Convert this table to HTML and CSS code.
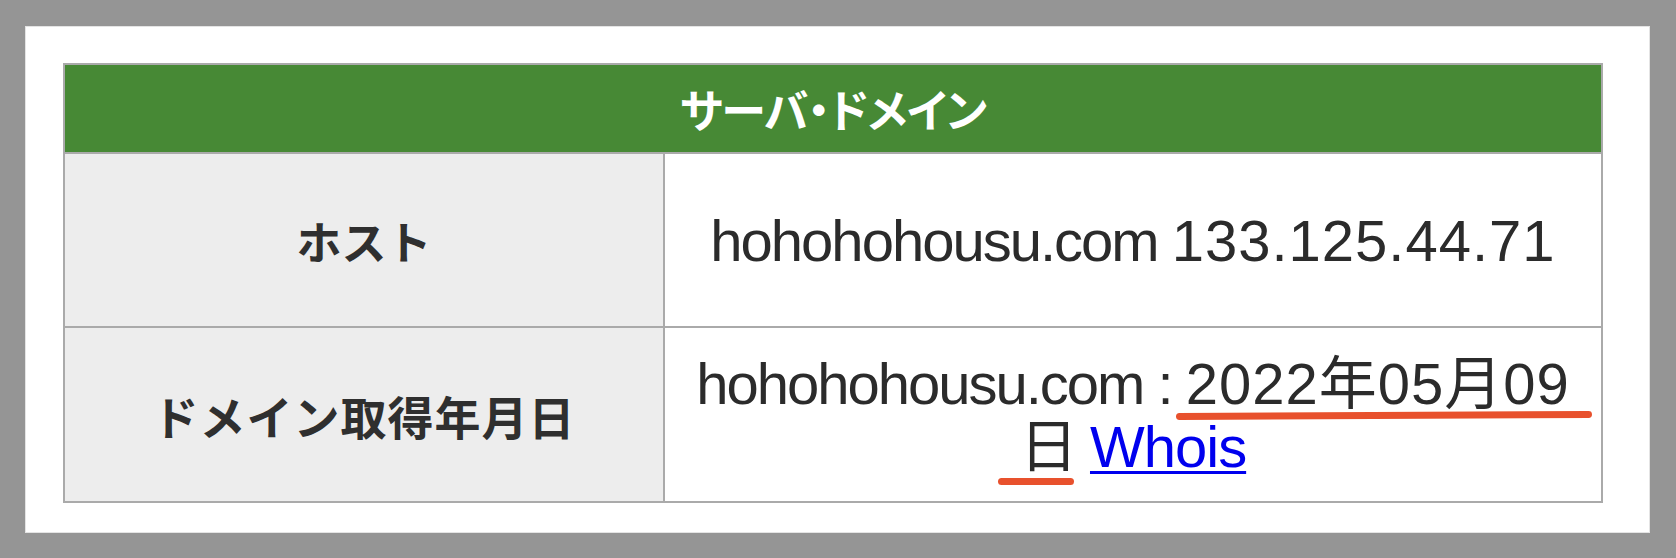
FILE: index.html
```html
<!DOCTYPE html>
<html lang="ja">
<head>
<meta charset="utf-8">
<title>サーバ・ドメイン</title>
<link rel="stylesheet" href="styles.css">
</head>
<body>
<div class="panel">
  <table class="info">
    <colgroup>
      <col class="col-label">
      <col class="col-value">
    </colgroup>
    <thead>
      <tr><th colspan="2" class="head">サーバ・ドメイン</th></tr>
    </thead>
    <tbody>
      <tr class="row1">
        <th class="label">ホスト</th>
        <td class="value">hohohohousu.com <span class="num">133.125.44.71</span></td>
      </tr>
      <tr class="row2">
        <th class="label label-wide">ドメイン取得年月日</th>
        <td class="value">hohohohousu.com : <span class="mark mark-long num">2022年05月09</span><span class="mark mark-short">日</span> <a href="#" class="link">Whois</a></td>
      </tr>
    </tbody>
  </table>
</div>
</body>
</html>
```

FILE: styles.css
```css
html, body {
  margin: 0;
  padding: 0;
}

body {
  background: #959595;
  width: 1676px;
  height: 558px;
  overflow: hidden;
  font-family: "Liberation Sans", "Noto Sans CJK JP", sans-serif;
  color: #2b2b2b;
}

.panel {
  box-sizing: border-box;
  margin: 26px 0 0 25px;
  width: 1625px;
  height: 507px;
  background: #ffffff;
  border: 1px solid #e4e4e4;
  padding: 36px 48px 0 37px;
}

.info {
  border-collapse: collapse;
  width: 1538px;
  table-layout: fixed;
}

.col-label {
  width: 600px;
}

.col-value {
  width: 938px;
}

.info th,
.info td {
  border: 2px solid #aaaaaa;
  padding: 0;
  text-align: center;
  vertical-align: middle;
}

.head {
  height: 87px;
  background: #478935;
  color: #ffffff;
  font-family: "Noto Sans CJK JP", sans-serif;
  font-weight: 700;
  font-size: 45px;
  line-height: 50px;
  font-feature-settings: "palt";
  letter-spacing: -1px;
}

.label {
  background: #ededed;
  font-family: "Noto Sans CJK JP", sans-serif;
  font-weight: 700;
  font-size: 45px;
  color: #2f2f2f;
}

.label-wide {
  font-size: 46px;
  letter-spacing: 1px;
}

.row1 .label,
.row1 .value {
  height: 172px;
}

.row2 .label,
.row2 .value {
  height: 173px;
}

.value {
  background: #ffffff;
  font-size: 58px;
  line-height: 63px;
  letter-spacing: -2px;
}

.info td.value {
  padding: 0 20px;
}

.num {
  letter-spacing: 1px;
}

.mark {
  position: relative;
}

.mark::after {
  content: "";
  position: absolute;
  background: #e8512d;
  border-radius: 4px;
}

.mark-long::after {
  left: -10px;
  right: -22px;
  bottom: -3px;
  height: 7px;
  transform: rotate(-0.3deg);
}

.mark-short::after {
  left: -22px;
  right: 2px;
  bottom: -6px;
  height: 7px;
}

.link {
  color: #0000ee;
  text-decoration: underline;
  text-decoration-thickness: 3px;
  text-underline-offset: 4px;
  letter-spacing: -1px;
}
```
